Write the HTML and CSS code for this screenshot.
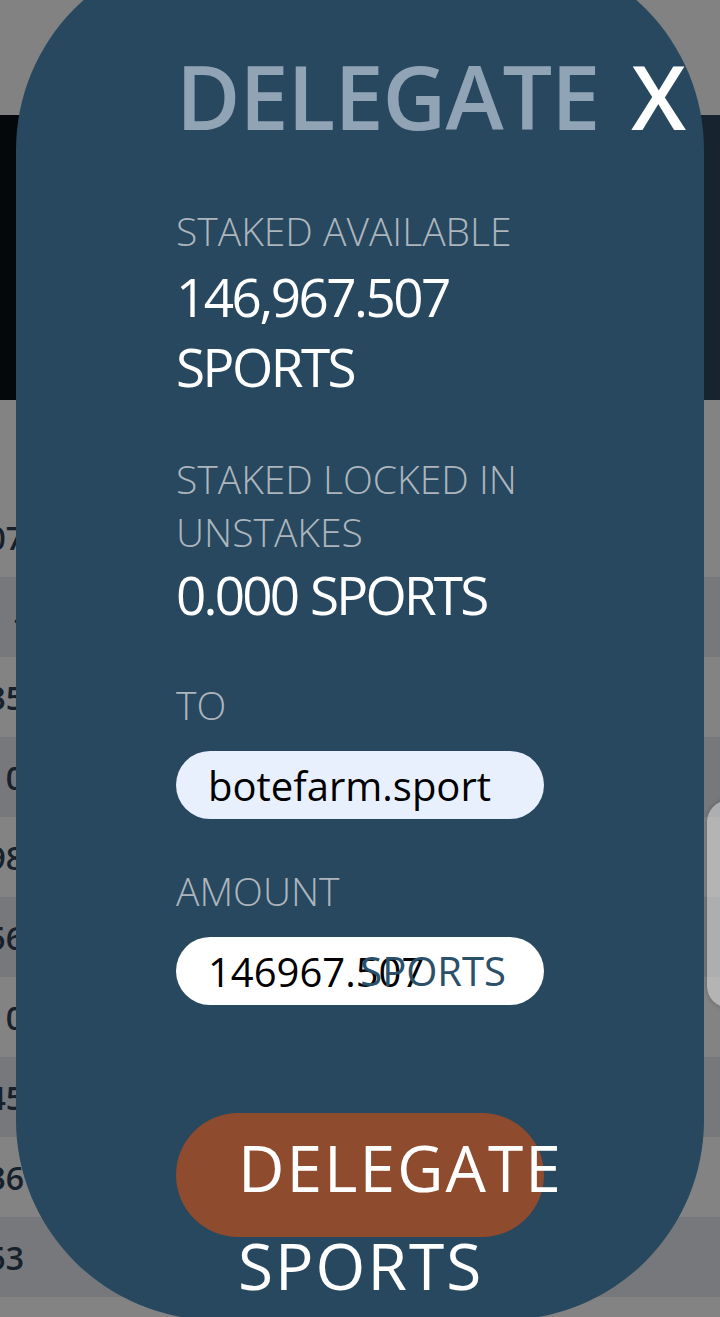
FILE: index.html
```html
<!DOCTYPE html>
<html lang="en">
<head>
    <meta charset="UTF-8">
    <meta name="viewport" content="width=device-width, initial-scale=1.0">
    <title>Delegate</title>
    <link rel="stylesheet" href="styles.css">
</head>
<body>
    <div class="page">
        <div class="topbar"></div>
        <div class="hero"></div>
        <div class="table">
            <div class="table-head"></div>
            <div class="row"><span class="cell">146,967.507</span></div>
            <div class="row"><span class="cell">-</span></div>
            <div class="row"><span class="cell">1,835</span></div>
            <div class="row"><span class="cell">0</span></div>
            <div class="row"><span class="cell">98</span></div>
            <div class="row"><span class="cell">456</span></div>
            <div class="row"><span class="cell">0</span></div>
            <div class="row"><span class="cell">345</span></div>
            <div class="row"><span class="cell">236</span></div>
            <div class="row"><span class="cell">153</span></div>
            <div class="row"></div>
        </div>
        <div class="side-card"></div>
    </div>

    <div class="modal">
        <div class="modal-body">
            <h1 class="modal-title">DELEGATE <span class="close">X</span></h1>

            <div class="stat first">
                <div class="stat-label">STAKED AVAILABLE</div>
                <div class="stat-value">146,967.507 SPORTS</div>
            </div>

            <div class="stat">
                <div class="stat-label">STAKED LOCKED IN UNSTAKES</div>
                <div class="stat-value tight">0.000 SPORTS</div>
            </div>

            <form id="delegateForm">
                <label class="field-label" for="to">TO</label>
                <input class="pill-input autofilled" type="text" id="to" name="to" value="botefarm.sport">

                <label class="field-label second" for="amount">AMOUNT</label>
                <div class="amount-wrap">
                    <input class="pill-input" type="text" id="amount" name="amount" value="146967.507">
                    <span class="suffix">SPORTS</span>
                </div>

                <button class="delegate-btn" type="submit">DELEGATE SPORTS</button>
            </form>
        </div>
    </div>

    <script>
        document.getElementById("delegateForm").addEventListener("submit", function(event) {
            event.preventDefault(); // no network here
        });
    </script>
</body>
</html>
```

FILE: styles.css
```css
body {
    margin: 0;
    font-family: "Open Sans", "Noto Sans", sans-serif;
    overflow: hidden;
}

/* page behind the dialog */
.page {
    height: 1317px;
    background-color: #838383;
}

.topbar {
    height: 115px;
    background-color: #828282;
}

.hero {
    height: 285px;
    background: linear-gradient(90deg, #04080b, #17242f);
}

.table-head {
    height: 97px;
}

.row {
    height: 80px;
    display: flex;
    align-items: center;
}

.row:nth-child(odd) {
    background-color: #77787c;
}

.cell {
    width: 24px;
    display: flex;
    justify-content: flex-end;
    white-space: nowrap;
    font-size: 32px;
    font-weight: 600;
    color: #16212b;
}

.side-card {
    position: absolute;
    left: 707px;
    top: 800px;
    width: 60px;
    height: 208px;
    border-radius: 22px;
    background-color: rgba(255, 255, 255, 0.4);
    box-shadow: 0 0 4px rgba(0, 0, 0, 0.25);
}

/* dialog */
.modal {
    position: absolute;
    left: 16px;
    top: -50px;
    width: 688px;
    height: 1370px;
    padding: 96px 0 0 160px;
    box-sizing: border-box;
    border-radius: 200px;
    background-color: #27485f;
}

.modal-body {
    width: 368px;
}

.modal-title {
    margin: 0;
    white-space: nowrap;
    font-size: 88px;
    line-height: 100px;
    font-weight: 600;
    letter-spacing: -1px;
    word-spacing: 10px;
    color: #91a4b5;
}

.close {
    color: #fff;
    font-weight: 600;
}

.stat.first {
    margin-top: 58px;
}

.stat {
    margin-top: 50px;
}

.stat-label,
.field-label {
    display: block;
    font-size: 39px;
    line-height: 53px;
    font-weight: 300;
    color: #adb5bd;
}

.stat-value {
    margin-top: 5px;
    font-size: 53px;
    line-height: 70px;
    letter-spacing: -2.5px;
    word-spacing: 2px;
    color: #fff;
}

.stat-value.tight {
    margin-top: 2px;
    letter-spacing: -2.8px;
}

.field-label {
    margin-top: 48px;
}

.field-label.second {
    margin-top: 45px;
}

.pill-input {
    display: block;
    width: 368px;
    height: 68px;
    margin-top: 20px;
    padding: 0 0 0 32px;
    border: none;
    border-radius: 34px;
    box-sizing: border-box;
    outline: none;
    font-family: "Open Sans", "Noto Sans", sans-serif;
    font-size: 40px;
    color: #000;
    background-color: #fff;
}

.pill-input.autofilled {
    background-color: #e8f0fe;
}

.amount-wrap {
    position: relative;
}

.suffix {
    position: absolute;
    right: 38px;
    top: 0;
    line-height: 68px;
    font-size: 40px;
    color: #2b5069;
}

.delegate-btn {
    display: block;
    width: 368px;
    height: 124px;
    margin-top: 108px;
    padding: 6px 62px 0;
    border: none;
    border-radius: 62px;
    box-sizing: border-box;
    text-align: left;
    font-family: "Open Sans", "Noto Sans", sans-serif;
    font-size: 64px;
    line-height: 98px;
    letter-spacing: 2px;
    color: #fff;
    background-color: #8e4b2e;
}
```
